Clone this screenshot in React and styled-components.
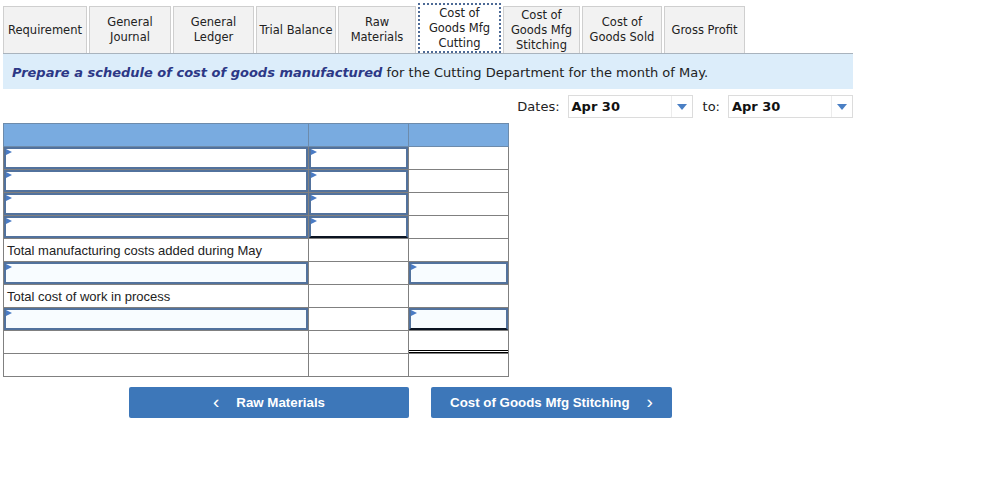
import styled, { createGlobalStyle } from "styled-components";

const GlobalStyle = createGlobalStyle`
  html, body {
    margin: 0;
    padding: 0;
    background: #fff;
  }
  body {
    font-family: "DejaVu Sans", Verdana, sans-serif;
    color: #222;
  }
`;

const tabs = [
  { label: "Requirement", width: 84 },
  { label: "General Journal", width: 82 },
  { label: "General Ledger", width: 81 },
  { label: "Trial Balance", width: 80 },
  { label: "Raw Materials", width: 78 },
  { label: "Cost of Goods Mfg Cutting", width: 83, active: true },
  { label: "Cost of Goods Mfg Stitching", width: 77 },
  { label: "Cost of Goods Sold", width: 80 },
  { label: "Gross Profit", width: 81 },
];

// kind: "text" | "input" | "empty"
const rows = [
  [{ kind: "input" }, { kind: "input" }, { kind: "empty" }],
  [{ kind: "input" }, { kind: "input" }, { kind: "empty" }],
  [{ kind: "input" }, { kind: "input" }, { kind: "empty" }],
  [{ kind: "input" }, { kind: "input", total: true }, { kind: "empty" }],
  [{ kind: "text", text: "Total manufacturing costs added during May" }, { kind: "empty" }, { kind: "empty" }],
  [{ kind: "input", tint: true }, { kind: "empty" }, { kind: "input", tint: true }],
  [{ kind: "text", text: "Total cost of work in process" }, { kind: "empty" }, { kind: "empty" }],
  [{ kind: "input", tint: true }, { kind: "empty" }, { kind: "input", tint: true, total: true }],
  [{ kind: "empty" }, { kind: "empty" }, { kind: "empty", double: true }],
  [{ kind: "empty" }, { kind: "empty" }, { kind: "empty" }],
];

function Dropdown({ value }) {
  return (
    <Select>
      <SelectValue>{value}</SelectValue>
      <SelectArrow>
        <svg width="10" height="6" viewBox="0 0 10 6">
          <path d="M0 0 L10 0 L5 6 Z" fill="#4a7fc4" />
        </svg>
      </SelectArrow>
    </Select>
  );
}

export default function App() {
  return (
    <Page>
      <GlobalStyle />
      <TabBar>
        {tabs.map((t) => (
          <Tab key={t.label} $width={t.width} $active={t.active}>
            {t.label}
          </Tab>
        ))}
      </TabBar>
      <Instruction>
        <strong>Prepare a schedule of cost of goods manufactured</strong> for the Cutting
        Department for the month of May.
      </Instruction>
      <DatesRow>
        <DateLabel>Dates:</DateLabel>
        <Dropdown value="Apr 30" />
        <DateLabel>to:</DateLabel>
        <Dropdown value="Apr 30" />
      </DatesRow>
      <Schedule>
        <colgroup>
          <col style={{ width: 305 }} />
          <col style={{ width: 100 }} />
          <col style={{ width: 100 }} />
        </colgroup>
        <thead>
          <tr>
            <HeadCell />
            <HeadCell />
            <HeadCell />
          </tr>
        </thead>
        <tbody>
          {rows.map((row, i) => (
            <tr key={i}>
              {row.map((c, j) => (
                <Cell key={j} $double={c.double}>
                  {c.kind === "text" && <Label>{c.text}</Label>}
                  {c.kind === "input" && <Field $tint={c.tint} $total={c.total} />}
                </Cell>
              ))}
            </tr>
          ))}
        </tbody>
      </Schedule>
      <NavRow>
        <NavButton $width={280}>
          <Chevron>&lsaquo;</Chevron>
          Raw Materials
        </NavButton>
        <NavButton $width={241}>
          Cost of Goods Mfg Stitching
          <Chevron>&rsaquo;</Chevron>
        </NavButton>
      </NavRow>
    </Page>
  );
}

const Page = styled.div`
  padding: 3px;
  width: 850px;
`;

const TabBar = styled.div`
  display: flex;
  align-items: flex-end;
  gap: 2px;
  height: 50px;
  border-bottom: 1px solid #a9b3bd;
`;

const Tab = styled.div`
  box-sizing: border-box;
  width: ${(p) => p.$width}px;
  height: ${(p) => (p.$active ? 50 : 47)}px;
  display: flex;
  align-items: center;
  justify-content: center;
  text-align: center;
  font-size: 11.5px;
  line-height: 15px;
  color: #222;
  background: ${(p) => (p.$active ? "#fff" : "#f2f2f2")};
  border: ${(p) => (p.$active ? "2px dotted #4d6a96" : "1px solid #cfcfcf")};
  border-bottom: ${(p) => (p.$active ? "2px dotted #4d6a96" : "none")};
  padding: ${(p) => (p.$active ? "1px 0 0" : "0")};
`;

const Instruction = styled.div`
  height: 35px;
  display: flex;
  align-items: center;
  padding: 2px 9px 0;
  box-sizing: border-box;
  background: #dcedfa;
  font-size: 13px;
  color: #222;
  white-space: pre;

  strong {
    color: #2c3886;
    font-style: italic;
    font-weight: bold;
  }
`;

const DatesRow = styled.div`
  display: flex;
  justify-content: flex-end;
  align-items: center;
  gap: 8px;
  margin-top: 6px;
  height: 23px;
`;

const DateLabel = styled.span`
  font-size: 13px;
  color: #222;
  margin-left: 2px;
`;

const Select = styled.div`
  box-sizing: border-box;
  width: 125px;
  height: 23px;
  display: flex;
  align-items: center;
  border: 1px solid #dcdcdc;
  background: #fff;
`;

const SelectValue = styled.span`
  flex: 1;
  padding-left: 3px;
  font-size: 13px;
  font-weight: bold;
  color: #111;
`;

const SelectArrow = styled.span`
  width: 20px;
  height: 100%;
  display: flex;
  align-items: center;
  justify-content: center;
  border-left: 1px solid #ececec;
`;

const Schedule = styled.table`
  margin-top: 5px;
  width: 505px;
  border-collapse: collapse;
  table-layout: fixed;
  font-family: "Liberation Sans", Arial, sans-serif;
`;

const HeadCell = styled.th`
  height: 22px;
  padding: 0;
  background: #79abe0;
  border: 1px solid #6d8bab;
`;

const Cell = styled.td`
  height: 22px;
  padding: 0;
  border: 1px solid #808080;
  vertical-align: middle;
  background: ${(p) =>
    p.$double
      ? "linear-gradient(#000, #000) left 0 bottom 0 / 100% 1px no-repeat, linear-gradient(#000, #000) left 0 bottom 2px / 100% 1px no-repeat"
      : "none"};
`;

const Label = styled.div`
  padding: 0 3px;
  font-size: 13px;
  color: #222;
  white-space: nowrap;
`;

const Field = styled.div`
  position: relative;
  box-sizing: border-box;
  height: 22px;
  border: 2px solid #52729d;
  border-bottom-color: ${(p) => (p.$total ? "#0b1422" : "#52729d")};
  background: ${(p) => (p.$tint ? "#f8fcff" : "#fff")};

  &::before {
    content: "";
    position: absolute;
    left: 0;
    top: 0;
    border-style: solid;
    border-width: 3px 0 3px 6px;
    border-color: transparent transparent transparent #4a7bc4;
  }
`;

const NavRow = styled.div`
  display: flex;
  gap: 22px;
  margin-top: 10px;
  padding-left: 126px;
`;

const NavButton = styled.button`
  width: ${(p) => p.$width}px;
  height: 31px;
  display: flex;
  align-items: center;
  justify-content: center;
  gap: 17px;
  border: none;
  border-radius: 2px;
  background: #3d77b9;
  color: #fff;
  font-family: "Liberation Sans", Arial, sans-serif;
  font-size: 13.3px;
  font-weight: bold;
  cursor: pointer;
`;

const Chevron = styled.span`
  font-size: 19px;
  font-weight: normal;
  line-height: 1;
  margin-top: -2px;
`;
